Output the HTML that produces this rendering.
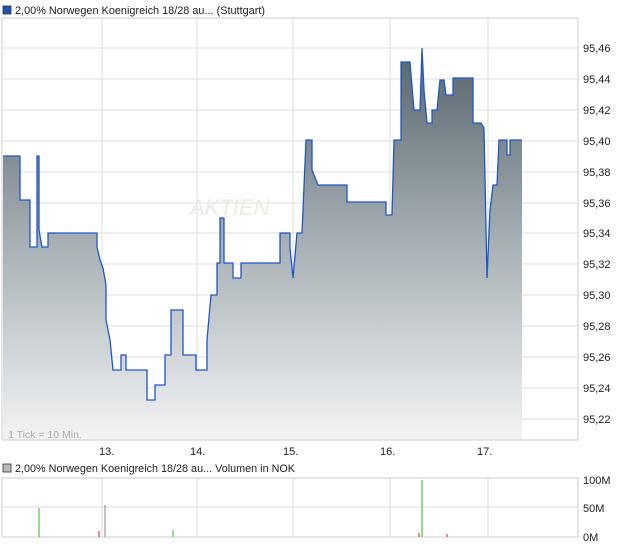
<!DOCTYPE html>
<html><head><meta charset="utf-8"><style>
body{margin:0;background:#fff;font-family:"Liberation Sans",sans-serif;}
</style></head><body>
<svg width="620" height="546" xmlns="http://www.w3.org/2000/svg" font-family="Liberation Sans, sans-serif">
<defs><linearGradient id="g" x1="0" y1="48" x2="0" y2="440" gradientUnits="userSpaceOnUse">
<stop offset="0" stop-color="#56646c"/><stop offset="0.5" stop-color="#a7b0b5"/><stop offset="1" stop-color="#f3f4f5"/></linearGradient></defs>
<rect x="3" y="6" width="8" height="8" fill="#1f4fb0" stroke="#333" stroke-width="0.8"/>
<text x="15" y="14" font-size="11" fill="#222" textLength="250" lengthAdjust="spacingAndGlyphs">2,00% Norwegen Koenigreich 18/28 au... (Stuttgart)</text>
<g stroke="#ddd" stroke-width="1">
<line x1="102" y1="18" x2="102" y2="440"/><line x1="197" y1="18" x2="197" y2="440"/><line x1="293" y1="18" x2="293" y2="440"/><line x1="390" y1="18" x2="390" y2="440"/><line x1="488" y1="18" x2="488" y2="440"/>
<line x1="2" y1="48" x2="578" y2="48"/><line x1="2" y1="79" x2="578" y2="79"/><line x1="2" y1="110" x2="578" y2="110"/><line x1="2" y1="141" x2="578" y2="141"/><line x1="2" y1="172" x2="578" y2="172"/><line x1="2" y1="203" x2="578" y2="203"/><line x1="2" y1="233" x2="578" y2="233"/><line x1="2" y1="264" x2="578" y2="264"/><line x1="2" y1="295" x2="578" y2="295"/><line x1="2" y1="326" x2="578" y2="326"/><line x1="2" y1="357" x2="578" y2="357"/><line x1="2" y1="388" x2="578" y2="388"/><line x1="2" y1="419" x2="578" y2="419"/>
</g>
<text x="190" y="215" font-size="22" fill="#eee9e2" font-style="italic">AKTIEN</text>
<path fill="url(#g)" d="M3,440 L3,156 20,156 20,200 30,200 30,247 37,247 37,156 39,156 39,230 42,247 48,247 48,233 97,233 97,247 100,260 103,268 106,285 106,320 110,340 113,370 121,370 121,355 126,355 126,370 147,370 147,400 155,400 155,385 165,385 165,355 171,355 171,310 183,310 183,355 196,355 196,370 207,370 207,340 211,295 217,295 217,263 220,263 220,218 224,218 224,263 233,263 233,278 241,278 241,263 280,263 280,233 290,233 290,248 293,278 297,233 302,233 306,140 312,140 312,170 318,185 347,185 347,202 386,202 386,215 392,215 394,140 401,140 401,62 410,62 414,110 420,110 422,48 424,90 427,123 432,123 432,110 437,110 440,80 444,80 446,95 453,95 453,78 473,78 473,123 481,123 484,128 487,278 490,210 493,185 497,185 499,140 507,140 507,155 510,155 510,140 522,140 L522,440 Z"/>
<path fill="none" stroke="#1f56c8" stroke-width="1.3" d="M3,156 20,156 20,200 30,200 30,247 37,247 37,156 39,156 39,230 42,247 48,247 48,233 97,233 97,247 100,260 103,268 106,285 106,320 110,340 113,370 121,370 121,355 126,355 126,370 147,370 147,400 155,400 155,385 165,385 165,355 171,355 171,310 183,310 183,355 196,355 196,370 207,370 207,340 211,295 217,295 217,263 220,263 220,218 224,218 224,263 233,263 233,278 241,278 241,263 280,263 280,233 290,233 290,248 293,278 297,233 302,233 306,140 312,140 312,170 318,185 347,185 347,202 386,202 386,215 392,215 394,140 401,140 401,62 410,62 414,110 420,110 422,48 424,90 427,123 432,123 432,110 437,110 440,80 444,80 446,95 453,95 453,78 473,78 473,123 481,123 484,128 487,278 490,210 493,185 497,185 499,140 507,140 507,155 510,155 510,140 522,140"/>
<rect x="2" y="18" width="576" height="422" fill="none" stroke="#ccc"/>
<text x="8" y="438" font-size="10.5" fill="#aaa">1 Tick = 10 Min.</text>
<g font-size="11" fill="#222">
<text x="583" y="52">95,46</text><text x="583" y="83">95,44</text><text x="583" y="114">95,42</text><text x="583" y="145">95,40</text><text x="583" y="176">95,38</text><text x="583" y="207">95,36</text><text x="583" y="237">95,34</text><text x="583" y="268">95,32</text><text x="583" y="299">95,30</text><text x="583" y="330">95,28</text><text x="583" y="361">95,26</text><text x="583" y="392">95,24</text><text x="583" y="423">95,22</text>
<text x="99" y="455">13.</text><text x="190" y="455">14.</text><text x="283" y="455">15.</text><text x="380" y="455">16.</text><text x="477" y="455">17.</text>
</g>
<rect x="3" y="464" width="8" height="8" fill="#bbb" stroke="#333" stroke-width="0.8"/>
<text x="15" y="472" font-size="11" fill="#222" textLength="280" lengthAdjust="spacingAndGlyphs">2,00% Norwegen Koenigreich 18/28 au... Volumen in NOK</text>
<g stroke="#ddd"><line x1="102" y1="478" x2="102" y2="537"/><line x1="197" y1="478" x2="197" y2="537"/><line x1="293" y1="478" x2="293" y2="537"/><line x1="390" y1="478" x2="390" y2="537"/><line x1="488" y1="478" x2="488" y2="537"/><line x1="2" y1="507" x2="578" y2="507"/></g>
<rect x="2" y="478" width="576" height="59" fill="none" stroke="#ccc"/>
<g stroke-width="1.2"><line x1="39" y1="537" x2="39" y2="508" stroke="#4c4"/><line x1="99" y1="537" x2="99" y2="531" stroke="#d44"/><line x1="105" y1="537" x2="105" y2="505" stroke="#999"/><line x1="173" y1="537" x2="173" y2="530" stroke="#4c4"/><line x1="419" y1="537" x2="419" y2="533" stroke="#d44"/><line x1="422" y1="537" x2="422" y2="480" stroke="#4c4"/><line x1="447" y1="537" x2="447" y2="534" stroke="#d44"/></g>
<g font-size="11" fill="#222"><text x="583" y="484">100M</text><text x="583" y="512">50M</text><text x="583" y="541">0M</text></g>
</svg>
</body></html>
